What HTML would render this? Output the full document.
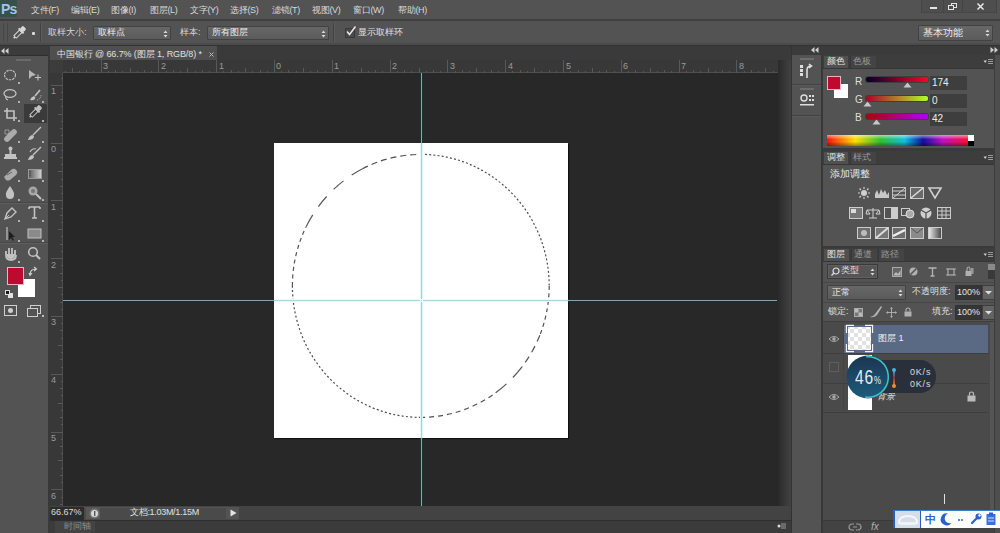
<!DOCTYPE html>
<html><head><meta charset="utf-8">
<style>
*{margin:0;padding:0;box-sizing:border-box}
html,body{width:1000px;height:533px;overflow:hidden;background:#282828;font-family:"Liberation Sans",sans-serif;color:#d8d8d8}
.a{position:absolute}
.t{position:absolute;white-space:nowrap;font-size:10px;line-height:12px}
svg{position:absolute;overflow:visible}
</style></head><body>
<div class="a" style="left:0px;top:0px;width:1000px;height:19px;background:#535353;"></div>
<div class="a" style="left:0px;top:19px;width:1000px;height:2px;background:#3f3f3f;"></div>
<div class="a" style="left:0px;top:0px;width:17px;height:17px;background:#34504f;"></div>
<div class="t" style="left:1px;top:1px;font-size:14px;line-height:16px;color:#a6c2ea;font-weight:bold;letter-spacing:-0.8px;line-height:16px">Ps</div>
<div class="t" style="left:31px;top:5px;font-size:9px;line-height:11px;color:#d8d8d8;letter-spacing:-0.3px">文件(F)</div>
<div class="t" style="left:71px;top:5px;font-size:9px;line-height:11px;color:#d8d8d8;letter-spacing:-0.3px">编辑(E)</div>
<div class="t" style="left:111px;top:5px;font-size:9px;line-height:11px;color:#d8d8d8;letter-spacing:-0.3px">图像(I)</div>
<div class="t" style="left:150px;top:5px;font-size:9px;line-height:11px;color:#d8d8d8;letter-spacing:-0.3px">图层(L)</div>
<div class="t" style="left:190px;top:5px;font-size:9px;line-height:11px;color:#d8d8d8;letter-spacing:-0.3px">文字(Y)</div>
<div class="t" style="left:230px;top:5px;font-size:9px;line-height:11px;color:#d8d8d8;letter-spacing:-0.3px">选择(S)</div>
<div class="t" style="left:272px;top:5px;font-size:9px;line-height:11px;color:#d8d8d8;letter-spacing:-0.3px">滤镜(T)</div>
<div class="t" style="left:312px;top:5px;font-size:9px;line-height:11px;color:#d8d8d8;letter-spacing:-0.3px">视图(V)</div>
<div class="t" style="left:353px;top:5px;font-size:9px;line-height:11px;color:#d8d8d8;letter-spacing:-0.3px">窗口(W)</div>
<div class="t" style="left:398px;top:5px;font-size:9px;line-height:11px;color:#d8d8d8;letter-spacing:-0.3px">帮助(H)</div>
<div class="a" style="left:921px;top:0px;width:76px;height:13px;background:#4e4e4e;border-left:1px solid #444;border-right:1px solid #444;border-bottom:1px solid #474747"></div>
<div class="a" style="left:943px;top:0px;width:1px;height:13px;background:#444444;"></div>
<div class="a" style="left:962px;top:0px;width:1px;height:13px;background:#444444;"></div>
<div class="a" style="left:930px;top:7px;width:7px;height:2px;background:#e4e4e4;"></div>
<div class="a" style="left:951px;top:3px;width:6px;height:5px;background:transparent;border:1px solid #e4e4e4"></div>
<div class="a" style="left:948px;top:5px;width:6px;height:5px;background:#4e4e4e;border:1px solid #e4e4e4"></div>
<svg style="left:977px;top:3px" width="7" height="7"><path d="M0.5 0.5L6.5 6.5M6.5 0.5L0.5 6.5" stroke="#e8e8e8" stroke-width="1.5"/></svg>
<div class="a" style="left:0px;top:21px;width:1000px;height:24px;background:#535353;"></div>
<div class="a" style="left:0px;top:43px;width:1000px;height:2px;background:#4b4b4b;"></div>
<div class="a" style="left:0px;top:45px;width:1000px;height:1px;background:#333333;"></div>
<div class="a" style="left:3px;top:23px;width:1px;height:19px;background:#474747;"></div>
<div class="a" style="left:7px;top:23px;width:1px;height:19px;background:#474747;"></div>
<svg style="left:11px;top:25px" width="16" height="16"><g transform="rotate(45 8 8)"><rect x="6.3" y="5.5" width="3.4" height="8" fill="#535353" stroke="#d8d8d8" stroke-width="1"/><path d="M8 13.5V15.5" stroke="#d8d8d8" stroke-width="1.6"/><rect x="5.5" y="0" width="5" height="4.5" rx="1.5" fill="#d8d8d8"/><rect x="4.5" y="4" width="7" height="2" fill="#d8d8d8"/></g></svg>
<div class="a" style="left:32px;top:32px;width:3px;height:3px;background:#dcdcdc;border-radius:1px"></div>
<div class="a" style="left:40px;top:23px;width:1px;height:19px;background:#424242;"></div>
<div class="a" style="left:41px;top:23px;width:1px;height:19px;background:#5c5c5c;"></div>
<div class="t" style="left:48px;top:27px;font-size:9px;line-height:11px;color:#d8d8d8;">取样大小:</div>
<div class="a" style="left:93px;top:26px;width:78px;height:14px;background:linear-gradient(#676767,#5b5b5b);border:1px solid #424242;border-radius:1px"></div>
<div class="t" style="left:98px;top:27px;font-size:9px;line-height:11px;color:#ececec;">取样点</div>
<svg style="left:163px;top:30px" width="5" height="8"><path d="M0.5 3L2.5 0.5L4.5 3Z M0.5 5L2.5 7.5L4.5 5Z" fill="#d8d8d8"/></svg>
<div class="t" style="left:180px;top:27px;font-size:9px;line-height:11px;color:#d8d8d8;">样本:</div>
<div class="a" style="left:207px;top:26px;width:122px;height:14px;background:linear-gradient(#676767,#5b5b5b);border:1px solid #424242;border-radius:1px"></div>
<div class="t" style="left:212px;top:27px;font-size:9px;line-height:11px;color:#ececec;">所有图层</div>
<svg style="left:321px;top:30px" width="5" height="8"><path d="M0.5 3L2.5 0.5L4.5 3Z M0.5 5L2.5 7.5L4.5 5Z" fill="#d8d8d8"/></svg>
<div class="a" style="left:333px;top:23px;width:1px;height:19px;background:#424242;"></div>
<div class="a" style="left:334px;top:23px;width:1px;height:19px;background:#5c5c5c;"></div>
<div class="a" style="left:345px;top:28px;width:10px;height:10px;background:#4a4a4a;border:1px solid #3a3a3a"></div>
<svg style="left:345px;top:25px" width="12" height="12"><path d="M2 6.5L4.5 9.5L10.5 1.5" stroke="#e8e8e8" stroke-width="1.5" fill="none"/></svg>
<div class="t" style="left:358px;top:27px;font-size:9px;line-height:11px;color:#e0e0e0;">显示取样环</div>
<div class="a" style="left:918px;top:25px;width:75px;height:16px;background:linear-gradient(#676767,#5b5b5b);border:1px solid #424242;border-radius:1px"></div>
<div class="t" style="left:923px;top:27px;font-size:10px;line-height:12px;color:#ececec;">基本功能</div>
<svg style="left:985px;top:29px" width="5" height="8"><path d="M0.5 3L2.5 0.5L4.5 3Z M0.5 5L2.5 7.5L4.5 5Z" fill="#d8d8d8"/></svg>
<div class="a" style="left:0px;top:46px;width:48px;height:487px;background:#535353;"></div>
<div class="a" style="left:0px;top:46px;width:48px;height:10px;background:#3c3c3c;"></div>
<div class="a" style="left:0px;top:55px;width:48px;height:1px;background:#2e2e2e;"></div>
<svg style="left:1px;top:48px" width="8" height="6"><path d="M3.5 0L0 3L3.5 6Z M7.5 0L4 3L7.5 6Z" fill="#cfcfcf"/></svg>
<div class="a" style="left:48px;top:46px;width:2px;height:487px;background:#3a3a3a;"></div>
<div class="a" style="left:16px;top:59px;width:15px;height:2px;background:#6a6a6a;"></div>
<div class="a" style="left:24px;top:104px;width:23px;height:19px;background:#3a3a3a;border-radius:1px"></div>
<svg style="left:0;top:0" width="0" height="0"><defs><linearGradient id="gr"><stop offset="0" stop-color="#eee"/><stop offset="1" stop-color="#444"/></linearGradient><linearGradient id="gr2"><stop offset="0" stop-color="#555"/><stop offset="1" stop-color="#d8d8d8"/></linearGradient></defs></svg>
<svg style="left:3px;top:68px" width="16" height="16"><ellipse cx="7" cy="7" rx="5.5" ry="4.8" stroke="#c2c2c2" stroke-width="1.1" fill="none" stroke-dasharray="2.5 0.8"/></svg>
<svg style="left:27px;top:68px" width="16" height="16"><path d="M2 2L2 11L5 8L9 7Z" fill="#c2c2c2" opacity="0.9"/><path d="M8 9.5h6M11 6.5v6" stroke="#c2c2c2" stroke-width="1.1"/></svg>
<svg style="left:3px;top:88px" width="16" height="16"><ellipse cx="7" cy="5.5" rx="6" ry="3.8" stroke="#c2c2c2" stroke-width="1.3" fill="none"/><path d="M3 8Q2 11 5 12" stroke="#c2c2c2" stroke-width="1.2" fill="none"/></svg>
<svg style="left:27px;top:87px" width="16" height="16"><path d="M3 13Q4 10 7 9Q9 10 8 12Q6 14 3 13Z" fill="#c2c2c2"/><path d="M8 9L13 3" stroke="#c2c2c2" stroke-width="1.6"/><path d="M10 13A5 5 0 0 0 14 8" stroke="#c2c2c2" stroke-width="1" stroke-dasharray="1 1" fill="none"/></svg>
<svg style="left:3px;top:107px" width="16" height="16"><path d="M4 1V11H14M1 4H11V14" stroke="#c2c2c2" stroke-width="1.6" fill="none"/></svg>
<svg style="left:27px;top:104px" width="16" height="16"><g transform="rotate(45 8 8)"><rect x="6.3" y="5.5" width="3.4" height="8" fill="#3a3a3a" stroke="#c2c2c2" stroke-width="1"/><path d="M8 13.5V15.5" stroke="#c2c2c2" stroke-width="1.6"/><rect x="5.5" y="0" width="5" height="4.5" rx="1.5" fill="#c2c2c2"/><rect x="4.5" y="4" width="7" height="2" fill="#c2c2c2"/></g></svg>
<svg style="left:3px;top:127px" width="16" height="16"><path d="M2 10L9 3Q11 1 13 3Q15 5 13 7L6 14Q4 16 2 14Q0 12 2 10Z" fill="#c2c2c2" opacity="0.8"/><path d="M2 3H6V7H2Z" fill="none" stroke="#c2c2c2" stroke-width="1" opacity="0.6"/></svg>
<svg style="left:27px;top:126px" width="16" height="16"><path d="M1 14Q2 10 5 9Q7 9 7 11Q6 14 1 14Z" fill="#c2c2c2"/><path d="M6 9L14 1" stroke="#c2c2c2" stroke-width="1.4"/></svg>
<svg style="left:3px;top:146px" width="16" height="16"><circle cx="7.5" cy="2.5" r="2" fill="#c2c2c2"/><path d="M6.5 4h2v4h-2Z M2 8h11v3H2Z M1 11h13v2H1Z" fill="#c2c2c2"/></svg>
<svg style="left:27px;top:146px" width="16" height="16"><path d="M1 14Q2 10 5 9Q7 9 7 11Q6 14 1 14Z" fill="#c2c2c2"/><path d="M6 9L14 1" stroke="#c2c2c2" stroke-width="1.4"/><path d="M3 6Q5 2 9 3" stroke="#c2c2c2" stroke-width="1.1" fill="none"/></svg>
<svg style="left:3px;top:166px" width="16" height="16"><path d="M1 11L8 4Q10 2 12 3L14 5Q15 7 13 9L7 14Q5 15 3 14Z" fill="#c2c2c2" opacity="0.8"/><path d="M4 9L9 6" stroke="#666" stroke-width="1"/></svg>
<svg style="left:27px;top:166px" width="16" height="16"><rect x="1" y="3" width="14" height="10" fill="url(#gr2)"/><rect x="1.5" y="3.5" width="13" height="9" fill="none" stroke="#9a9a9a"/><path d="M3 5V11" stroke="#444" stroke-dasharray="1 1"/></svg>
<svg style="left:3px;top:185px" width="16" height="16"><path d="M7 1Q12 8 11 10A4 4 0 0 1 3 10Q2 8 7 1Z" fill="#c2c2c2"/></svg>
<svg style="left:27px;top:185px" width="16" height="16"><circle cx="6" cy="6" r="4.5" fill="#c2c2c2" opacity="0.75"/><circle cx="6" cy="6" r="2" fill="#777"/><path d="M9 9L14 14" stroke="#c2c2c2" stroke-width="2"/></svg>
<svg style="left:3px;top:206px" width="16" height="16"><path d="M2 13L4 7L9 2L13 6L8 11Z" stroke="#c2c2c2" stroke-width="1.4" fill="none"/><path d="M2 13L6 9" stroke="#c2c2c2" stroke-width="1"/></svg>
<svg style="left:27px;top:205px" width="16" height="16"><path d="M2 2H13M7.5 2V13M5 13H10M2 2V4M13 2V4" stroke="#c2c2c2" stroke-width="1.6" fill="none"/></svg>
<svg style="left:3px;top:226px" width="16" height="16"><path d="M4 1V14" stroke="#c2c2c2" stroke-width="1.2"/><path d="M6 5L6 14L8 12L10 15L11 14L9 11L12 11Z" fill="#1e1e1e"/></svg>
<svg style="left:27px;top:226px" width="16" height="16"><rect x="1" y="3" width="13" height="9" fill="#8a8a8a" stroke="#c2c2c2" stroke-width="1"/></svg>
<svg style="left:3px;top:246px" width="16" height="16"><path d="M3 9V5M6 8V2M9 8V2M12 9V4M3 9Q3 14 8 14Q13 14 13 9" stroke="#c2c2c2" stroke-width="1.8" fill="none"/><path d="M4 10Q4 13 8 13Q12 13 12 9V8H4Z" fill="#c2c2c2"/></svg>
<svg style="left:27px;top:246px" width="16" height="16"><circle cx="6" cy="6" r="4.3" stroke="#c2c2c2" stroke-width="1.6" fill="none"/><path d="M9 9L13 13" stroke="#c2c2c2" stroke-width="2.2"/></svg>
<div class="a" style="left:18px;top:82px;width:2px;height:2px;background:#b0b0b0;"></div>
<div class="a" style="left:18px;top:101px;width:2px;height:2px;background:#b0b0b0;"></div>
<div class="a" style="left:42px;top:101px;width:2px;height:2px;background:#b0b0b0;"></div>
<div class="a" style="left:18px;top:120px;width:2px;height:2px;background:#b0b0b0;"></div>
<div class="a" style="left:42px;top:120px;width:2px;height:2px;background:#b0b0b0;"></div>
<div class="a" style="left:18px;top:141px;width:2px;height:2px;background:#b0b0b0;"></div>
<div class="a" style="left:42px;top:141px;width:2px;height:2px;background:#b0b0b0;"></div>
<div class="a" style="left:18px;top:160px;width:2px;height:2px;background:#b0b0b0;"></div>
<div class="a" style="left:42px;top:160px;width:2px;height:2px;background:#b0b0b0;"></div>
<div class="a" style="left:18px;top:180px;width:2px;height:2px;background:#b0b0b0;"></div>
<div class="a" style="left:42px;top:180px;width:2px;height:2px;background:#b0b0b0;"></div>
<div class="a" style="left:18px;top:199px;width:2px;height:2px;background:#b0b0b0;"></div>
<div class="a" style="left:42px;top:199px;width:2px;height:2px;background:#b0b0b0;"></div>
<div class="a" style="left:18px;top:220px;width:2px;height:2px;background:#b0b0b0;"></div>
<div class="a" style="left:42px;top:220px;width:2px;height:2px;background:#b0b0b0;"></div>
<div class="a" style="left:18px;top:240px;width:2px;height:2px;background:#b0b0b0;"></div>
<div class="a" style="left:42px;top:240px;width:2px;height:2px;background:#b0b0b0;"></div>
<div class="a" style="left:18px;top:261px;width:2px;height:2px;background:#b0b0b0;"></div>
<div class="a" style="left:0px;top:202px;width:48px;height:1px;background:#474747;"></div>
<div class="a" style="left:0px;top:203px;width:48px;height:1px;background:#5e5e5e;"></div>
<div class="a" style="left:0px;top:242px;width:48px;height:1px;background:#474747;"></div>
<div class="a" style="left:0px;top:243px;width:48px;height:1px;background:#5e5e5e;"></div>
<div class="a" style="left:18px;top:279px;width:17px;height:18px;background:#ffffff;"></div>
<div class="a" style="left:7px;top:267px;width:17px;height:18px;background:#bd0a2e;border:1px solid #f2b0c0"></div>
<svg style="left:29px;top:267px" width="9" height="9"><path d="M1 8Q1 2 7 2M5 0L7.5 2L5 4M0 6L1 8.5L3 6" stroke="#d0d0d0" stroke-width="1.1" fill="none"/></svg>
<div class="a" style="left:8px;top:293px;width:5px;height:5px;background:#e0e0e0;"></div>
<div class="a" style="left:5px;top:290px;width:5px;height:5px;background:#1a1a1a;border:1px solid #e0e0e0"></div>
<svg style="left:4px;top:305px" width="14" height="11"><rect x="0.5" y="0.5" width="12" height="10" stroke="#cfcfcf" fill="none"/><circle cx="6.5" cy="5.5" r="2.5" fill="#cfcfcf"/></svg>
<svg style="left:27px;top:305px" width="14" height="12"><rect x="3.5" y="0.5" width="10" height="8" stroke="#cfcfcf" fill="none"/><rect x="0.5" y="3.5" width="10" height="8" stroke="#cfcfcf" fill="#535353"/></svg>
<div class="a" style="left:42px;top:315px;width:2px;height:2px;background:#bdbdbd;"></div>
<div class="a" style="left:50px;top:46px;width:730px;height:14px;background:#3a3a3a;"></div>
<div class="a" style="left:50px;top:46px;width:167px;height:14px;background:#4f4f4f;"></div>
<div class="t" style="left:57px;top:48px;font-size:9px;line-height:11px;color:#e0e0e0;letter-spacing:-0.1px;line-height:12px">中国银行 @ 66.7% (图层 1, RGB/8) *</div>
<svg style="left:209px;top:52px" width="5" height="5"><path d="M0.5 0.5L4.5 4.5M4.5 0.5L0.5 4.5" stroke="#b8b8b8" stroke-width="1"/></svg>
<div class="a" style="left:50px;top:60px;width:730px;height:13px;background:#383838;"></div>
<div class="a" style="left:48px;top:60px;width:15px;height:446px;background:#383838;"></div>
<div class="a" style="left:50px;top:72px;width:730px;height:1px;background:#4e4e4e;"></div>
<div class="a" style="left:62px;top:60px;width:1px;height:446px;background:#4e4e4e;"></div>
<div class="a" style="left:50px;top:60px;width:13px;height:13px;background:#3c3c3c;"></div>
<svg style="left:0;top:0" width="1000" height="533"><g stroke="#585858" stroke-width="1" shape-rendering="crispEdges"><line x1="65.0" y1="71" x2="65.0" y2="73" /><line x1="72.2" y1="68" x2="72.2" y2="73" /><line x1="79.4" y1="71" x2="79.4" y2="73" /><line x1="86.7" y1="70" x2="86.7" y2="73" /><line x1="93.9" y1="71" x2="93.9" y2="73" /><line x1="101.1" y1="60" x2="101.1" y2="73" stroke="#7a7a7a"/><line x1="101.1" y1="60" x2="101.1" y2="73" /><line x1="108.3" y1="71" x2="108.3" y2="73" /><line x1="115.6" y1="70" x2="115.6" y2="73" /><line x1="122.8" y1="71" x2="122.8" y2="73" /><line x1="130.0" y1="68" x2="130.0" y2="73" /><line x1="137.2" y1="71" x2="137.2" y2="73" /><line x1="144.5" y1="70" x2="144.5" y2="73" /><line x1="151.7" y1="71" x2="151.7" y2="73" /><line x1="158.9" y1="60" x2="158.9" y2="73" stroke="#7a7a7a"/><line x1="158.9" y1="60" x2="158.9" y2="73" /><line x1="166.1" y1="71" x2="166.1" y2="73" /><line x1="173.3" y1="70" x2="173.3" y2="73" /><line x1="180.6" y1="71" x2="180.6" y2="73" /><line x1="187.8" y1="68" x2="187.8" y2="73" /><line x1="195.0" y1="71" x2="195.0" y2="73" /><line x1="202.2" y1="70" x2="202.2" y2="73" /><line x1="209.5" y1="71" x2="209.5" y2="73" /><line x1="216.7" y1="60" x2="216.7" y2="73" stroke="#7a7a7a"/><line x1="216.7" y1="60" x2="216.7" y2="73" /><line x1="223.9" y1="71" x2="223.9" y2="73" /><line x1="231.1" y1="70" x2="231.1" y2="73" /><line x1="238.4" y1="71" x2="238.4" y2="73" /><line x1="245.6" y1="68" x2="245.6" y2="73" /><line x1="252.8" y1="71" x2="252.8" y2="73" /><line x1="260.0" y1="70" x2="260.0" y2="73" /><line x1="267.3" y1="71" x2="267.3" y2="73" /><line x1="274.5" y1="60" x2="274.5" y2="73" stroke="#7a7a7a"/><line x1="274.5" y1="60" x2="274.5" y2="73" /><line x1="281.7" y1="71" x2="281.7" y2="73" /><line x1="288.9" y1="70" x2="288.9" y2="73" /><line x1="296.2" y1="71" x2="296.2" y2="73" /><line x1="303.4" y1="68" x2="303.4" y2="73" /><line x1="310.6" y1="71" x2="310.6" y2="73" /><line x1="317.9" y1="70" x2="317.9" y2="73" /><line x1="325.1" y1="71" x2="325.1" y2="73" /><line x1="332.3" y1="60" x2="332.3" y2="73" stroke="#7a7a7a"/><line x1="332.3" y1="60" x2="332.3" y2="73" /><line x1="339.5" y1="71" x2="339.5" y2="73" /><line x1="346.8" y1="70" x2="346.8" y2="73" /><line x1="354.0" y1="71" x2="354.0" y2="73" /><line x1="361.2" y1="68" x2="361.2" y2="73" /><line x1="368.4" y1="71" x2="368.4" y2="73" /><line x1="375.6" y1="70" x2="375.6" y2="73" /><line x1="382.9" y1="71" x2="382.9" y2="73" /><line x1="390.1" y1="60" x2="390.1" y2="73" stroke="#7a7a7a"/><line x1="390.1" y1="60" x2="390.1" y2="73" /><line x1="397.3" y1="71" x2="397.3" y2="73" /><line x1="404.6" y1="70" x2="404.6" y2="73" /><line x1="411.8" y1="71" x2="411.8" y2="73" /><line x1="419.0" y1="68" x2="419.0" y2="73" /><line x1="426.2" y1="71" x2="426.2" y2="73" /><line x1="433.5" y1="70" x2="433.5" y2="73" /><line x1="440.7" y1="71" x2="440.7" y2="73" /><line x1="447.9" y1="60" x2="447.9" y2="73" stroke="#7a7a7a"/><line x1="447.9" y1="60" x2="447.9" y2="73" /><line x1="455.1" y1="71" x2="455.1" y2="73" /><line x1="462.3" y1="70" x2="462.3" y2="73" /><line x1="469.6" y1="71" x2="469.6" y2="73" /><line x1="476.8" y1="68" x2="476.8" y2="73" /><line x1="484.0" y1="71" x2="484.0" y2="73" /><line x1="491.2" y1="70" x2="491.2" y2="73" /><line x1="498.5" y1="71" x2="498.5" y2="73" /><line x1="505.7" y1="60" x2="505.7" y2="73" stroke="#7a7a7a"/><line x1="505.7" y1="60" x2="505.7" y2="73" /><line x1="512.9" y1="71" x2="512.9" y2="73" /><line x1="520.1" y1="70" x2="520.1" y2="73" /><line x1="527.4" y1="71" x2="527.4" y2="73" /><line x1="534.6" y1="68" x2="534.6" y2="73" /><line x1="541.8" y1="71" x2="541.8" y2="73" /><line x1="549.0" y1="70" x2="549.0" y2="73" /><line x1="556.3" y1="71" x2="556.3" y2="73" /><line x1="563.5" y1="60" x2="563.5" y2="73" stroke="#7a7a7a"/><line x1="563.5" y1="60" x2="563.5" y2="73" /><line x1="570.7" y1="71" x2="570.7" y2="73" /><line x1="578.0" y1="70" x2="578.0" y2="73" /><line x1="585.2" y1="71" x2="585.2" y2="73" /><line x1="592.4" y1="68" x2="592.4" y2="73" /><line x1="599.6" y1="71" x2="599.6" y2="73" /><line x1="606.9" y1="70" x2="606.9" y2="73" /><line x1="614.1" y1="71" x2="614.1" y2="73" /><line x1="621.3" y1="60" x2="621.3" y2="73" stroke="#7a7a7a"/><line x1="621.3" y1="60" x2="621.3" y2="73" /><line x1="628.5" y1="71" x2="628.5" y2="73" /><line x1="635.8" y1="70" x2="635.8" y2="73" /><line x1="643.0" y1="71" x2="643.0" y2="73" /><line x1="650.2" y1="68" x2="650.2" y2="73" /><line x1="657.4" y1="71" x2="657.4" y2="73" /><line x1="664.6" y1="70" x2="664.6" y2="73" /><line x1="671.9" y1="71" x2="671.9" y2="73" /><line x1="679.1" y1="60" x2="679.1" y2="73" stroke="#7a7a7a"/><line x1="679.1" y1="60" x2="679.1" y2="73" /><line x1="686.3" y1="71" x2="686.3" y2="73" /><line x1="693.5" y1="70" x2="693.5" y2="73" /><line x1="700.8" y1="71" x2="700.8" y2="73" /><line x1="708.0" y1="68" x2="708.0" y2="73" /><line x1="715.2" y1="71" x2="715.2" y2="73" /><line x1="722.4" y1="70" x2="722.4" y2="73" /><line x1="729.7" y1="71" x2="729.7" y2="73" /><line x1="736.9" y1="60" x2="736.9" y2="73" stroke="#7a7a7a"/><line x1="736.9" y1="60" x2="736.9" y2="73" /><line x1="744.1" y1="71" x2="744.1" y2="73" /><line x1="751.4" y1="70" x2="751.4" y2="73" /><line x1="758.6" y1="71" x2="758.6" y2="73" /><line x1="765.8" y1="68" x2="765.8" y2="73" /><line x1="773.0" y1="71" x2="773.0" y2="73" /></g></svg>
<div class="t" style="left:103px;top:61px;font-size:9px;line-height:11px;color:#9a9a9a;">3</div>
<div class="t" style="left:161px;top:61px;font-size:9px;line-height:11px;color:#9a9a9a;">2</div>
<div class="t" style="left:219px;top:61px;font-size:9px;line-height:11px;color:#9a9a9a;">1</div>
<div class="t" style="left:276px;top:61px;font-size:9px;line-height:11px;color:#9a9a9a;">0</div>
<div class="t" style="left:334px;top:61px;font-size:9px;line-height:11px;color:#9a9a9a;">1</div>
<div class="t" style="left:392px;top:61px;font-size:9px;line-height:11px;color:#9a9a9a;">2</div>
<div class="t" style="left:450px;top:61px;font-size:9px;line-height:11px;color:#9a9a9a;">3</div>
<div class="t" style="left:508px;top:61px;font-size:9px;line-height:11px;color:#9a9a9a;">4</div>
<div class="t" style="left:566px;top:61px;font-size:9px;line-height:11px;color:#9a9a9a;">5</div>
<div class="t" style="left:623px;top:61px;font-size:9px;line-height:11px;color:#9a9a9a;">6</div>
<div class="t" style="left:681px;top:61px;font-size:9px;line-height:11px;color:#9a9a9a;">7</div>
<div class="t" style="left:739px;top:61px;font-size:9px;line-height:11px;color:#9a9a9a;">8</div>
<svg style="left:0;top:0" width="1000" height="533"><g stroke="#585858" stroke-width="1" shape-rendering="crispEdges"><line x1="61" y1="78.0" x2="63" y2="78.0" /><line x1="51" y1="85.2" x2="63" y2="85.2" /><line x1="61" y1="92.4" x2="63" y2="92.4" /><line x1="60" y1="99.7" x2="63" y2="99.7" /><line x1="61" y1="106.9" x2="63" y2="106.9" /><line x1="58" y1="114.1" x2="63" y2="114.1" /><line x1="61" y1="121.3" x2="63" y2="121.3" /><line x1="60" y1="128.6" x2="63" y2="128.6" /><line x1="61" y1="135.8" x2="63" y2="135.8" /><line x1="51" y1="143.0" x2="63" y2="143.0" /><line x1="61" y1="150.2" x2="63" y2="150.2" /><line x1="60" y1="157.4" x2="63" y2="157.4" /><line x1="61" y1="164.7" x2="63" y2="164.7" /><line x1="58" y1="171.9" x2="63" y2="171.9" /><line x1="61" y1="179.1" x2="63" y2="179.1" /><line x1="60" y1="186.3" x2="63" y2="186.3" /><line x1="61" y1="193.6" x2="63" y2="193.6" /><line x1="51" y1="200.8" x2="63" y2="200.8" /><line x1="61" y1="208.0" x2="63" y2="208.0" /><line x1="60" y1="215.2" x2="63" y2="215.2" /><line x1="61" y1="222.5" x2="63" y2="222.5" /><line x1="58" y1="229.7" x2="63" y2="229.7" /><line x1="61" y1="236.9" x2="63" y2="236.9" /><line x1="60" y1="244.2" x2="63" y2="244.2" /><line x1="61" y1="251.4" x2="63" y2="251.4" /><line x1="51" y1="258.6" x2="63" y2="258.6" /><line x1="61" y1="265.8" x2="63" y2="265.8" /><line x1="60" y1="273.1" x2="63" y2="273.1" /><line x1="61" y1="280.3" x2="63" y2="280.3" /><line x1="58" y1="287.5" x2="63" y2="287.5" /><line x1="61" y1="294.7" x2="63" y2="294.7" /><line x1="60" y1="302.0" x2="63" y2="302.0" /><line x1="61" y1="309.2" x2="63" y2="309.2" /><line x1="51" y1="316.4" x2="63" y2="316.4" /><line x1="61" y1="323.6" x2="63" y2="323.6" /><line x1="60" y1="330.8" x2="63" y2="330.8" /><line x1="61" y1="338.1" x2="63" y2="338.1" /><line x1="58" y1="345.3" x2="63" y2="345.3" /><line x1="61" y1="352.5" x2="63" y2="352.5" /><line x1="60" y1="359.8" x2="63" y2="359.8" /><line x1="61" y1="367.0" x2="63" y2="367.0" /><line x1="51" y1="374.2" x2="63" y2="374.2" /><line x1="61" y1="381.4" x2="63" y2="381.4" /><line x1="60" y1="388.6" x2="63" y2="388.6" /><line x1="61" y1="395.9" x2="63" y2="395.9" /><line x1="58" y1="403.1" x2="63" y2="403.1" /><line x1="61" y1="410.3" x2="63" y2="410.3" /><line x1="60" y1="417.5" x2="63" y2="417.5" /><line x1="61" y1="424.8" x2="63" y2="424.8" /><line x1="51" y1="432.0" x2="63" y2="432.0" /><line x1="61" y1="439.2" x2="63" y2="439.2" /><line x1="60" y1="446.4" x2="63" y2="446.4" /><line x1="61" y1="453.7" x2="63" y2="453.7" /><line x1="58" y1="460.9" x2="63" y2="460.9" /><line x1="61" y1="468.1" x2="63" y2="468.1" /><line x1="60" y1="475.4" x2="63" y2="475.4" /><line x1="61" y1="482.6" x2="63" y2="482.6" /><line x1="51" y1="489.8" x2="63" y2="489.8" /><line x1="61" y1="497.0" x2="63" y2="497.0" /><line x1="60" y1="504.2" x2="63" y2="504.2" /></g></svg>
<div class="t" style="left:51px;top:86px;font-size:9px;line-height:11px;color:#9a9a9a;">1</div>
<div class="t" style="left:51px;top:144px;font-size:9px;line-height:11px;color:#9a9a9a;">0</div>
<div class="t" style="left:51px;top:202px;font-size:9px;line-height:11px;color:#9a9a9a;">1</div>
<div class="t" style="left:51px;top:260px;font-size:9px;line-height:11px;color:#9a9a9a;">2</div>
<div class="t" style="left:51px;top:317px;font-size:9px;line-height:11px;color:#9a9a9a;">3</div>
<div class="t" style="left:51px;top:375px;font-size:9px;line-height:11px;color:#9a9a9a;">4</div>
<div class="t" style="left:51px;top:433px;font-size:9px;line-height:11px;color:#9a9a9a;">5</div>
<div class="t" style="left:51px;top:491px;font-size:9px;line-height:11px;color:#9a9a9a;">6</div>
<div class="a" style="left:63px;top:73px;width:717px;height:433px;background:#282828;"></div>
<div class="a" style="left:274px;top:143px;width:294px;height:295px;background:#ffffff;box-shadow:1px 1px 1px #111"></div>
<svg style="left:0;top:0" width="1000" height="533"><path d="M420.80 154.40A128.4 131.5 0 0 1 549.20 285.90" fill="none" stroke="#505050" stroke-width="1.2" stroke-dasharray="2 2.2"/><path d="M549.20 285.90A128.4 131.5 0 0 1 539.85 335.16" fill="none" stroke="#505050" stroke-width="1.2" stroke-dasharray="4 3.5"/><path d="M539.85 335.16A128.4 131.5 0 0 1 521.98 366.86" fill="none" stroke="#555555" stroke-width="1.2" stroke-dasharray="7 5"/><path d="M521.98 366.86A128.4 131.5 0 0 1 492.60 394.92" fill="none" stroke="#555555" stroke-width="1.2" stroke-dasharray="14 9"/><path d="M492.60 394.92A128.4 131.5 0 0 1 420.80 417.40" fill="none" stroke="#505050" stroke-width="1.2" stroke-dasharray="5 4"/><path d="M420.80 417.40A128.4 131.5 0 0 1 292.40 285.90" fill="none" stroke="#4c4c4c" stroke-width="1.2" stroke-dasharray="2 2.3"/><path d="M292.40 285.90A128.4 131.5 0 0 1 306.39 226.20" fill="none" stroke="#555555" stroke-width="1.2" stroke-dasharray="4 3.5"/><path d="M306.39 226.20A128.4 131.5 0 0 1 362.51 168.73" fill="none" stroke="#5a5a5a" stroke-width="1.2" stroke-dasharray="13 10"/><path d="M362.51 168.73A128.4 131.5 0 0 1 420.80 154.40" fill="none" stroke="#505050" stroke-width="1.2" stroke-dasharray="6 4"/></svg>
<div class="a" style="left:421px;top:73px;width:1px;height:433px;background:#80aca8;"></div>
<div class="a" style="left:63px;top:300px;width:714px;height:1px;background:#86a6ac;"></div>
<div class="a" style="left:420px;top:73px;width:1px;height:433px;background:#1f302c;"></div>
<div class="a" style="left:422px;top:73px;width:1px;height:433px;background:#1f302c;"></div>
<div class="a" style="left:63px;top:299px;width:714px;height:1px;background:#1e2c30;"></div>
<div class="a" style="left:63px;top:301px;width:714px;height:1px;background:#1a2a2e;"></div>
<div class="a" style="left:421px;top:143px;width:1px;height:295px;background:#a4d4d2;"></div>
<div class="a" style="left:274px;top:300px;width:294px;height:1px;background:#a8d8da;"></div>
<div class="a" style="left:420px;top:143px;width:1px;height:295px;background:#e4f8f8;"></div>
<div class="a" style="left:422px;top:143px;width:1px;height:295px;background:#e4f8f8;"></div>
<div class="a" style="left:274px;top:299px;width:294px;height:1px;background:#e8fafa;"></div>
<div class="a" style="left:274px;top:301px;width:294px;height:1px;background:#e8fafa;"></div>
<div class="a" style="left:50px;top:506px;width:742px;height:14px;background:#434343;"></div>
<div class="a" style="left:84px;top:507px;width:155px;height:13px;background:#4a4a4a;border-top:1px solid #555"></div>
<div class="a" style="left:86px;top:508px;width:14px;height:11px;background:#585858;"></div>
<div class="a" style="left:50px;top:507px;width:34px;height:13px;background:#2c2c2c;"></div>
<div class="t" style="left:51px;top:507px;font-size:9px;line-height:11px;color:#dcdcdc;">66.67%</div>
<svg style="left:89px;top:508px" width="11" height="11"><circle cx="5.5" cy="5.5" r="5" fill="#777"/><circle cx="5.5" cy="5.5" r="3.5" fill="#d8d8d8"/><rect x="5" y="3" width="1.4" height="5" fill="#555"/></svg>
<div class="t" style="left:130px;top:507px;font-size:9px;line-height:11px;color:#e0e0e0;letter-spacing:-0.3px">文档:1.03M/1.15M</div>
<div class="a" style="left:226px;top:507px;width:13px;height:12px;background:#535353;"></div>
<svg style="left:230px;top:509px" width="7" height="8"><path d="M0.5 0.5L6.5 4L0.5 7.5Z" fill="#e4e4e4"/></svg>
<div class="a" style="left:50px;top:520px;width:742px;height:1px;background:#2e2e2e;"></div>
<div class="a" style="left:50px;top:521px;width:742px;height:12px;background:#3b3b3b;"></div>
<div class="a" style="left:55px;top:521px;width:40px;height:12px;background:#434343;"></div>
<div class="t" style="left:64px;top:521px;font-size:9px;line-height:11px;color:#8c8c8c;">时间轴</div>
<div class="a" style="left:778px;top:60px;width:14px;height:446px;background:linear-gradient(90deg,#2a2a2a,#3a3a3a 60%,#424242);"></div>
<div class="a" style="left:780px;top:46px;width:12px;height:14px;background:#3a3a3a;"></div>
<div class="a" style="left:791px;top:46px;width:1px;height:487px;background:#333333;"></div>
<div class="a" style="left:792px;top:46px;width:208px;height:9px;background:#3b3b3b;"></div>
<svg style="left:811px;top:47px" width="8" height="6"><path d="M3.5 0L0 3L3.5 6Z M7.5 0L4 3L7.5 6Z" fill="#cfcfcf"/></svg>
<svg style="left:990px;top:47px" width="8" height="6"><path d="M0.5 0L4 3L0.5 6Z M4.5 0L8 3L4.5 6Z" fill="#cfcfcf"/></svg>
<div class="a" style="left:792px;top:55px;width:29px;height:478px;background:#535353;"></div>
<div class="a" style="left:792px;top:84px;width:29px;height:1px;background:#424242;"></div>
<div class="a" style="left:792px;top:85px;width:29px;height:1px;background:#5a5a5a;"></div>
<div class="a" style="left:792px;top:115px;width:29px;height:1px;background:#424242;"></div>
<div class="a" style="left:792px;top:116px;width:29px;height:1px;background:#5a5a5a;"></div>
<div class="a" style="left:800px;top:58px;width:14px;height:2px;background:#6c6c6c;"></div>
<div class="a" style="left:800px;top:88px;width:14px;height:2px;background:#6c6c6c;"></div>
<svg style="left:800px;top:64px" width="14" height="15"><rect x="0" y="1" width="3" height="3" fill="#ddd"/><rect x="0" y="5" width="3" height="3" fill="#ddd"/><rect x="0" y="9" width="3" height="3" fill="#ddd"/><path d="M7 14V6Q7 2 11 2M9 0L11.5 2L9 4" stroke="#ddd" stroke-width="1.6" fill="none"/></svg>
<svg style="left:800px;top:94px" width="15" height="14"><circle cx="4" cy="4" r="3" stroke="#ddd" stroke-width="1.4" fill="none"/><rect x="9" y="1" width="2" height="2" fill="#ddd"/><rect x="12" y="1" width="2" height="2" fill="#ddd"/><rect x="9" y="5" width="2" height="2" fill="#ddd"/><rect x="12" y="5" width="2" height="2" fill="#ddd"/><rect x="0" y="10" width="14" height="1.5" fill="#ddd"/></svg>
<div class="a" style="left:821px;top:55px;width:2px;height:478px;background:#383838;"></div>
<div class="a" style="left:823px;top:55px;width:171px;height:478px;background:#535353;"></div>
<div class="a" style="left:994px;top:55px;width:1px;height:478px;background:#3c3c3c;"></div>
<div class="a" style="left:995px;top:55px;width:5px;height:478px;background:#4e4e4e;"></div>
<div class="a" style="left:823px;top:55px;width:171px;height:13px;background:#3d3d3d;"></div>
<div class="a" style="left:823px;top:68px;width:171px;height:1px;background:#363636;"></div>
<div class="a" style="left:824px;top:56px;width:24px;height:12px;background:#505050;"></div>
<div class="t" style="left:827px;top:56px;font-size:9px;line-height:11px;color:#e6e6e6;">颜色</div>
<div class="a" style="left:850px;top:56px;width:26px;height:12px;background:#444444;border-left:1px solid #373737"></div>
<div class="t" style="left:853px;top:56px;font-size:9px;line-height:11px;color:#9a9a9a;">色板</div>
<svg style="left:983px;top:58px" width="10" height="7"><path d="M0.5 2.5L4 2.5L2.25 5Z" fill="#d0d0d0"/><rect x="5" y="1" width="5" height="1" fill="#999"/><rect x="5" y="3" width="5" height="1" fill="#999"/><rect x="5" y="5" width="5" height="1" fill="#999"/></svg>
<div class="a" style="left:834px;top:84px;width:14px;height:14px;background:#ffffff;"></div>
<div class="a" style="left:827px;top:76px;width:14px;height:14px;background:#bd0a2e;border:1px solid #f0b0c0"></div>
<div class="t" style="left:855px;top:76px;font-size:10px;line-height:12px;color:#dedede;">R</div>
<div class="t" style="left:855px;top:94px;font-size:10px;line-height:12px;color:#dedede;">G</div>
<div class="t" style="left:855px;top:112px;font-size:10px;line-height:12px;color:#dedede;">B</div>
<div class="a" style="left:866px;top:77px;width:62px;height:5px;background:linear-gradient(90deg,#00002a,#ff002a);border-radius:2px;box-shadow:0 0 0 1px #3e3e3e"></div>
<svg style="left:903px;top:82px" width="9" height="6"><path d="M0.5 5.5L4.5 0.5L8.5 5.5Z" fill="#c8c8c8"/></svg>
<div class="a" style="left:866px;top:96px;width:62px;height:5px;background:linear-gradient(90deg,#ae002a,#aeff2a);border-radius:2px;box-shadow:0 0 0 1px #3e3e3e"></div>
<svg style="left:863px;top:101px" width="9" height="6"><path d="M0.5 5.5L4.5 0.5L8.5 5.5Z" fill="#c8c8c8"/></svg>
<div class="a" style="left:866px;top:114px;width:62px;height:5px;background:linear-gradient(90deg,#ae0000,#ae00ff);border-radius:2px;box-shadow:0 0 0 1px #3e3e3e"></div>
<svg style="left:872px;top:119px" width="9" height="6"><path d="M0.5 5.5L4.5 0.5L8.5 5.5Z" fill="#c8c8c8"/></svg>
<div class="a" style="left:930px;top:76px;width:37px;height:14px;background:#3e3e3e;"></div>
<div class="t" style="left:932px;top:77px;font-size:10px;line-height:12px;color:#ececec;">174</div>
<div class="a" style="left:930px;top:94px;width:37px;height:14px;background:#3e3e3e;"></div>
<div class="t" style="left:932px;top:95px;font-size:10px;line-height:12px;color:#ececec;">0</div>
<div class="a" style="left:930px;top:112px;width:37px;height:14px;background:#3e3e3e;"></div>
<div class="t" style="left:932px;top:113px;font-size:10px;line-height:12px;color:#ececec;">42</div>
<div class="a" style="left:827px;top:135px;width:141px;height:11px;background:linear-gradient(90deg,#ff1010,#ffe000 20%,#30c030 38%,#10c0e0 55%,#1010a0 68%,#c010c0 82%,#ff1030);"></div>
<div class="a" style="left:827px;top:135px;width:141px;height:11px;background:linear-gradient(#ffffff88,#ffffff00 40%,#00000000 60%,#00000066);"></div>
<div class="a" style="left:968px;top:135px;width:6px;height:6px;background:#ffffff;"></div>
<div class="a" style="left:968px;top:141px;width:6px;height:5px;background:#000000;"></div>
<div class="a" style="left:823px;top:148px;width:171px;height:3px;background:#3a3a3a;"></div>
<div class="a" style="left:823px;top:151px;width:171px;height:13px;background:#3d3d3d;"></div>
<div class="a" style="left:823px;top:164px;width:171px;height:1px;background:#363636;"></div>
<div class="a" style="left:824px;top:152px;width:24px;height:12px;background:#505050;"></div>
<div class="t" style="left:827px;top:152px;font-size:9px;line-height:11px;color:#e6e6e6;">调整</div>
<div class="a" style="left:850px;top:152px;width:26px;height:12px;background:#444444;border-left:1px solid #373737"></div>
<div class="t" style="left:853px;top:152px;font-size:9px;line-height:11px;color:#9a9a9a;">样式</div>
<svg style="left:983px;top:154px" width="10" height="7"><path d="M0.5 2.5L4 2.5L2.25 5Z" fill="#d0d0d0"/><rect x="5" y="1" width="5" height="1" fill="#999"/><rect x="5" y="3" width="5" height="1" fill="#999"/><rect x="5" y="5" width="5" height="1" fill="#999"/></svg>
<div class="t" style="left:830px;top:168px;font-size:10px;line-height:12px;color:#e8e8e8;">添加调整</div>
<svg style="left:857px;top:187px" width="14" height="12"><circle cx="7" cy="6" r="3" fill="#d0d0d0"/><path d="M7 0V2M7 10V12M1 6H3M11 6H13M2.5 1.5L4 3M10 9L11.5 10.5M11.5 1.5L10 3M4 9L2.5 10.5" stroke="#d0d0d0" stroke-width="1.2"/></svg>
<svg style="left:875px;top:187px" width="14" height="12"><path d="M0 11V7L2 3L4 8L6 2L8 6L10 3L12 8L14 5V11Z" fill="#c8c8c8"/></svg>
<svg style="left:892px;top:187px" width="14" height="12"><rect x="0.5" y="0.5" width="13" height="11" fill="none" stroke="#bbb"/><path d="M1 11L13 1M0 4H14M0 8H14" stroke="#d0d0d0" stroke-width="1"/></svg>
<svg style="left:910px;top:187px" width="14" height="12"><rect x="0.5" y="0.5" width="13" height="11" fill="#6a6a6a" stroke="#ccc"/><path d="M1 11L13 1" stroke="#e0e0e0" stroke-width="1.4"/></svg>
<svg style="left:928px;top:187px" width="14" height="12"><path d="M1 1H13L7 11Z" stroke="#d0d0d0" stroke-width="1.6" fill="none"/></svg>
<svg style="left:849px;top:207px" width="14" height="12"><rect x="0.5" y="0.5" width="13" height="11" fill="#777" stroke="#ccc"/><rect x="2" y="2" width="5" height="4" fill="#ddd"/></svg>
<svg style="left:866px;top:207px" width="14" height="12"><path d="M7 1V11M3 11H11M1 3H13M1 3L0 7H4Z M13 3L10 7H14Z" stroke="#d0d0d0" stroke-width="1" fill="none"/></svg>
<svg style="left:884px;top:207px" width="14" height="12"><rect x="0.5" y="0.5" width="13" height="11" fill="none" stroke="#ccc"/><rect x="7" y="1" width="6" height="10" fill="#ccc"/></svg>
<svg style="left:901px;top:207px" width="14" height="12"><rect x="0.5" y="1.5" width="8" height="7" fill="none" stroke="#ccc"/><circle cx="9" cy="7" r="4" fill="#aaa" stroke="#ddd"/></svg>
<svg style="left:919px;top:207px" width="14" height="12"><circle cx="7" cy="6" r="5.5" fill="#d0d0d0"/><path d="M7 6V12M7 6L2 3M7 6L12 3" stroke="#535353" stroke-width="1.3"/></svg>
<svg style="left:937px;top:207px" width="14" height="12"><rect x="0.5" y="0.5" width="13" height="11" fill="none" stroke="#ccc"/><path d="M0 4H14M0 8H14M5 0V12M9 0V12" stroke="#ccc"/></svg>
<svg style="left:857px;top:227px" width="14" height="12"><rect x="0.5" y="0.5" width="13" height="11" fill="#6d6d6d" stroke="#ccc"/><circle cx="7" cy="6" r="3" fill="#bbb"/></svg>
<svg style="left:875px;top:227px" width="14" height="12"><rect x="0.5" y="0.5" width="13" height="11" fill="#777" stroke="#ccc"/><path d="M1 11L13 1" stroke="#ddd" stroke-width="2"/></svg>
<svg style="left:892px;top:227px" width="14" height="12"><rect x="0.5" y="0.5" width="13" height="11" fill="#6d6d6d" stroke="#ccc"/><path d="M1 9L13 3" stroke="#eee" stroke-width="2.5"/></svg>
<svg style="left:910px;top:227px" width="14" height="12"><rect x="0.5" y="0.5" width="13" height="11" fill="#8a8a8a" stroke="#ccc"/><path d="M1 1L7 6L13 1" stroke="#555" stroke-width="1" fill="none"/></svg>
<svg style="left:928px;top:227px" width="14" height="12"><rect x="0.5" y="0.5" width="13" height="11" fill="url(#gr)" stroke="#ccc"/></svg>
<div class="a" style="left:823px;top:246px;width:171px;height:2px;background:#3a3a3a;"></div>
<div class="a" style="left:823px;top:248px;width:171px;height:13px;background:#3d3d3d;"></div>
<div class="a" style="left:823px;top:261px;width:171px;height:1px;background:#363636;"></div>
<div class="a" style="left:824px;top:249px;width:25px;height:12px;background:#505050;"></div>
<div class="t" style="left:827px;top:249px;font-size:9px;line-height:11px;color:#e6e6e6;">图层</div>
<div class="a" style="left:851px;top:249px;width:26px;height:12px;background:#444444;border-left:1px solid #373737"></div>
<div class="t" style="left:854px;top:249px;font-size:9px;line-height:11px;color:#9a9a9a;">通道</div>
<div class="a" style="left:878px;top:249px;width:26px;height:12px;background:#444444;border-left:1px solid #373737"></div>
<div class="t" style="left:881px;top:249px;font-size:9px;line-height:11px;color:#9a9a9a;">路径</div>
<svg style="left:983px;top:251px" width="10" height="7"><path d="M0.5 2.5L4 2.5L2.25 5Z" fill="#d0d0d0"/><rect x="5" y="1" width="5" height="1" fill="#999"/><rect x="5" y="3" width="5" height="1" fill="#999"/><rect x="5" y="5" width="5" height="1" fill="#999"/></svg>
<div class="a" style="left:827px;top:264px;width:51px;height:15px;background:#555555;border:1px solid #3a3a3a;box-shadow:inset 0 0 0 1px #606060"></div>
<svg style="left:831px;top:267px" width="9" height="9"><circle cx="5" cy="4" r="3" stroke="#ddd" stroke-width="1.2" fill="none"/><path d="M3 6L0.5 8.5" stroke="#ddd" stroke-width="1.4"/></svg>
<div class="t" style="left:841px;top:265px;font-size:9px;line-height:11px;color:#e0e0e0;">类型</div>
<svg style="left:870px;top:268px" width="5" height="8"><path d="M0.5 3L2.5 0.5L4.5 3Z M0.5 5L2.5 7.5L4.5 5Z" fill="#d8d8d8"/></svg>
<svg style="left:892px;top:267px" width="10" height="10"><rect x="0.5" y="0.5" width="9" height="9" stroke="#aaa" fill="#666"/><path d="M1.5 8L4 5L6 7L8.5 3V8.5H1.5Z" fill="#bbb"/></svg>
<svg style="left:909px;top:267px" width="9" height="9"><circle cx="4.5" cy="4.5" r="4" fill="#b0b0b0"/><path d="M1.5 7.5L7.5 1.5" stroke="#555" stroke-width="1.6"/></svg>
<svg style="left:928px;top:267px" width="9" height="10"><path d="M0.5 1H8.5M4.5 1V9M2.5 9H6.5" stroke="#b4b4b4" stroke-width="1.3" fill="none"/></svg>
<svg style="left:946px;top:267px" width="10" height="10"><rect x="2" y="2" width="6" height="6" stroke="#b0b0b0" stroke-width="1.2" fill="none"/><path d="M0 2H2M0 8H2M8 2H10M8 8H10" stroke="#aaa"/></svg>
<svg style="left:965px;top:266px" width="9" height="11"><rect x="0.5" y="5" width="6" height="5" fill="#b0b0b0"/><path d="M2 5V3Q2 1 3.5 1Q5 1 5 3V5" stroke="#b0b0b0" stroke-width="1.1" fill="none"/><rect x="6" y="2" width="2.5" height="6" fill="#999"/></svg>
<div class="a" style="left:988px;top:264px;width:7px;height:6px;background:#8a8a8a;"></div>
<div class="a" style="left:988px;top:270px;width:7px;height:9px;background:#3a3a3a;"></div>
<div class="a" style="left:823px;top:282px;width:171px;height:1px;background:#474747;"></div>
<div class="a" style="left:827px;top:285px;width:79px;height:15px;background:linear-gradient(#676767,#5b5b5b);border:1px solid #424242;border-radius:1px"></div>
<div class="t" style="left:832px;top:287px;font-size:9px;line-height:11px;color:#ececec;">正常</div>
<svg style="left:898px;top:289px" width="5" height="8"><path d="M0.5 3L2.5 0.5L4.5 3Z M0.5 5L2.5 7.5L4.5 5Z" fill="#d8d8d8"/></svg>
<div class="t" style="left:912px;top:286px;font-size:9px;line-height:11px;color:#e0e0e0;">不透明度:</div>
<div class="a" style="left:955px;top:285px;width:27px;height:15px;background:#353535;border:1px solid #333"></div>
<div class="t" style="left:957px;top:287px;font-size:9px;line-height:11px;color:#e4e4e4;">100%</div>
<div class="a" style="left:982px;top:285px;width:13px;height:15px;background:#636363;border:1px solid #3e3e3e"></div>
<svg style="left:985px;top:291px" width="7" height="4"><path d="M0 0L3.5 3.5L7 0Z" fill="#ddd"/></svg>
<div class="a" style="left:823px;top:302px;width:171px;height:1px;background:#474747;"></div>
<div class="t" style="left:828px;top:306px;font-size:9px;line-height:11px;color:#e0e0e0;">锁定:</div>
<svg style="left:854px;top:308px" width="9" height="9"><rect x="0.5" y="0.5" width="8" height="8" fill="#777" stroke="#aaa"/><rect x="1" y="1" width="3.5" height="3.5" fill="#bbb"/><rect x="4.5" y="4.5" width="3.5" height="3.5" fill="#bbb"/></svg>
<svg style="left:869px;top:305px" width="13" height="13"><path d="M1 12Q4 12 6 9L12 1L13 2L8 10Q5 13 1 12Z" fill="#b4b4b4"/></svg>
<svg style="left:886px;top:307px" width="11" height="11"><path d="M5.5 0.5V10.5M0.5 5.5H10.5" stroke="#aaa" stroke-width="1" fill="none"/><path d="M5.5 0L4 2H7Z M5.5 11L4 9H7Z M0 5.5L2 4V7Z M11 5.5L9 4V7Z" fill="#aaa"/></svg>
<svg style="left:904px;top:307px" width="8" height="10"><rect x="0.5" y="4.5" width="7" height="5" fill="#b0b0b0"/><path d="M2 4.5V3Q2 1 4 1Q6 1 6 3V4.5" stroke="#b0b0b0" stroke-width="1.1" fill="none"/></svg>
<div class="t" style="left:932px;top:306px;font-size:9px;line-height:11px;color:#e0e0e0;">填充:</div>
<div class="a" style="left:955px;top:305px;width:27px;height:15px;background:#353535;border:1px solid #333"></div>
<div class="t" style="left:957px;top:307px;font-size:9px;line-height:11px;color:#e4e4e4;">100%</div>
<div class="a" style="left:982px;top:305px;width:13px;height:15px;background:#636363;border:1px solid #3e3e3e"></div>
<svg style="left:985px;top:311px" width="7" height="4"><path d="M0 0L3.5 3.5L7 0Z" fill="#ddd"/></svg>
<div class="a" style="left:823px;top:321px;width:171px;height:1px;background:#3f3f3f;"></div>
<div class="a" style="left:823px;top:322px;width:167px;height:198px;background:#4a4a4a;"></div>
<div class="a" style="left:990px;top:322px;width:4px;height:198px;background:#555555;"></div>
<div class="a" style="left:844px;top:325px;width:144px;height:28px;background:#5a6a84;"></div>
<div class="a" style="left:823px;top:353px;width:166px;height:1px;background:#3f3f3f;"></div>
<div class="a" style="left:823px;top:383px;width:166px;height:1px;background:#3f3f3f;"></div>
<div class="a" style="left:823px;top:412px;width:166px;height:1px;background:#3f3f3f;"></div>
<div class="a" style="left:843px;top:324px;width:1px;height:88px;background:#444;"></div>
<svg style="left:828px;top:335px" width="12" height="8"><path d="M1 4Q6 -1 11 4Q6 9 1 4Z" fill="none" stroke="#a8a8a8" stroke-width="1"/><circle cx="6" cy="4" r="1.8" fill="#a8a8a8"/></svg>
<svg style="left:828px;top:393px" width="12" height="8"><path d="M1 4Q6 -1 11 4Q6 9 1 4Z" fill="none" stroke="#a8a8a8" stroke-width="1"/><circle cx="6" cy="4" r="1.8" fill="#a8a8a8"/></svg>
<div class="a" style="left:829px;top:362px;width:10px;height:10px;background:transparent;border:1px solid #5e5e5e"></div>
<svg style="left:846px;top:325px" width="27" height="27"><defs><pattern id="ck" width="8" height="8" patternUnits="userSpaceOnUse"><rect width="8" height="8" fill="#ffffff"/><rect width="4" height="4" fill="#e2e2e2"/><rect x="4" y="4" width="4" height="4" fill="#e2e2e2"/></pattern></defs><rect x="1.5" y="1.5" width="24" height="24" fill="url(#ck)"/><path d="M0.5 8V0.5H8M19 0.5H26.5V8M26.5 19V26.5H19M8 26.5H0.5V19" stroke="#f4f4f4" stroke-width="1.3" fill="none"/><rect x="1.5" y="1.5" width="24" height="24" fill="none" stroke="#5a6a84" stroke-width="1"/></svg>
<div class="t" style="left:878px;top:333px;font-size:9px;line-height:11px;color:#f0f0f0;">图层 1</div>
<div class="a" style="left:848px;top:355px;width:24px;height:26px;background:#ffffff;"></div>
<div class="a" style="left:848px;top:385px;width:24px;height:25px;background:#ffffff;"></div>
<div class="t" style="left:877px;top:391px;font-size:9px;line-height:11px;color:#e0e0e0;font-style:italic">背景</div>
<svg style="left:967px;top:391px" width="9" height="11"><rect x="0.5" y="4.5" width="8" height="6" fill="#bbb"/><path d="M2.5 4.5V3Q2.5 1 4.5 1Q6.5 1 6.5 3V4.5" stroke="#bbb" stroke-width="1.2" fill="none"/></svg>
<div class="a" style="left:866px;top:360px;width:70px;height:33px;background:#2a3039;border-radius:16px"></div>
<svg style="left:845px;top:354px" width="46" height="46"><defs><linearGradient id="wg" x1="0" y1="0" x2="0" y2="1"><stop offset="0" stop-color="#1c3550"/><stop offset="1" stop-color="#1a5d7c"/></linearGradient></defs><circle cx="23" cy="23" r="21.5" fill="url(#wg)"/><circle cx="23" cy="23" r="20.3" fill="none" stroke="#3ec4c8" stroke-width="1.5" stroke-dasharray="68 80" transform="rotate(-95 23 23)"/></svg>
<div class="t" style="left:855px;top:367px;font-size:20px;line-height:22px;color:#e0ecf2;font-weight:normal;line-height:20px;transform:scaleX(0.78);transform-origin:0 0;letter-spacing:1px">46<span style="font-size:10px">%</span></div>
<div class="a" style="left:893px;top:370px;width:2px;height:17px;background:linear-gradient(#3aaed8,#8a3050 45%,#e08a20);"></div>
<div class="a" style="left:892px;top:368px;width:4px;height:4px;background:#3ab8e0;border-radius:2px"></div>
<div class="a" style="left:892px;top:384px;width:4px;height:4px;background:#e89028;border-radius:2px"></div>
<div class="t" style="left:910px;top:367px;font-size:9px;line-height:11px;color:#d8dce2;line-height:10px;letter-spacing:0.8px">0K/s</div>
<div class="t" style="left:910px;top:379px;font-size:9px;line-height:11px;color:#d8dce2;line-height:10px;letter-spacing:0.8px">0K/s</div>
<div class="a" style="left:823px;top:521px;width:171px;height:12px;background:#434343;"></div>
<div class="a" style="left:823px;top:520px;width:171px;height:1px;background:#393939;"></div>
<svg style="left:849px;top:523px" width="12" height="8"><path d="M5 1H3A3 3 0 0 0 3 7H5M7 1H9A3 3 0 0 1 9 7H7M4 4H8" stroke="#9a9a9a" stroke-width="1.2" fill="none"/></svg>
<div class="t" style="left:871px;top:521px;font-size:10px;line-height:12px;color:#b0b0b0;line-height:12px"><i>fx</i></div>
<div class="a" style="left:893px;top:510px;width:107px;height:18px;background:#ffffff;border-top:1px solid #3a7bd5;border-left:2px solid #2a5bc0"></div>
<div class="a" style="left:895px;top:511px;width:26px;height:17px;background:#d4dde8;"></div>
<svg style="left:897px;top:513px" width="22" height="13"><path d="M2 10Q2 3 11 3Q20 3 20 10Z" fill="none" stroke="#f4f6fa" stroke-width="2"/><rect x="3" y="9" width="16" height="3" fill="#eef2f6"/></svg>
<div class="a" style="left:920px;top:511px;width:1px;height:17px;background:#2a5bc0;"></div>
<div class="t" style="left:925px;top:513px;font-size:11px;line-height:13px;color:#2a62c8;font-weight:bold;line-height:13px">中</div>
<svg style="left:942px;top:513px" width="10" height="12"><path d="M6 0.5A6 6 0 1 0 9.5 10A5 5 0 0 1 6 0.5Z" fill="#2a62c8"/></svg>
<div class="a" style="left:958px;top:519px;width:2px;height:2px;background:#5a8ad8;"></div>
<div class="a" style="left:961px;top:519px;width:2px;height:2px;background:#5a8ad8;"></div>
<svg style="left:971px;top:513px" width="11" height="11"><path d="M1 10L6 5" stroke="#2a62c8" stroke-width="2.2" stroke-linecap="round"/><circle cx="7.5" cy="3.5" r="3" fill="#2a62c8"/><circle cx="8.5" cy="2.5" r="1.2" fill="#fff"/></svg>
<svg style="left:986px;top:512px" width="10" height="14"><rect x="0.5" y="2" width="9" height="11" fill="#3a72d0"/><rect x="3" y="0.5" width="4" height="3" fill="#2a62c8"/><path d="M2 6H8M2 9H8" stroke="#cfe0f8" stroke-width="1"/></svg>
<div class="a" style="left:944px;top:494px;width:1px;height:10px;background:#e0e0e0;"></div>
<svg style="left:777px;top:522px" width="10" height="8"><circle cx="2" cy="4" r="1.5" fill="#ddd"/><path d="M4 2H9M4 4H9M4 6H9" stroke="#999" stroke-width="1"/></svg>
</body></html>
